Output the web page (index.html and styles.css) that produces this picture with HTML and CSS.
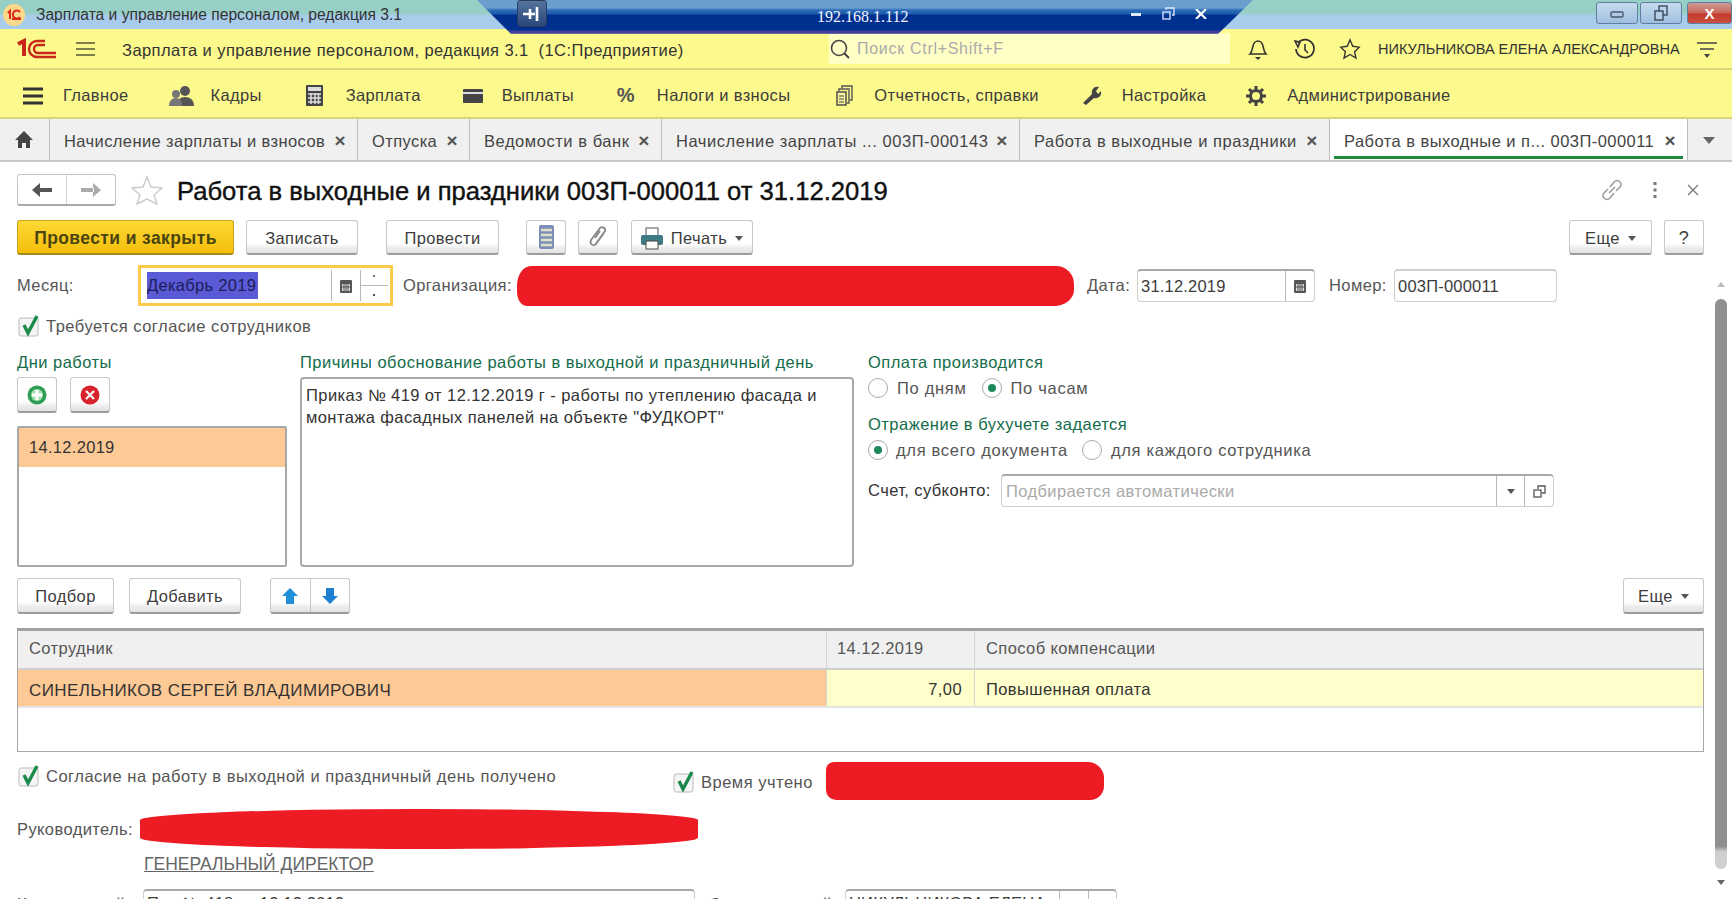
FILE: index.html
```html
<!DOCTYPE html>
<html lang="ru">
<head>
    <meta charset="UTF-8">
    <title>Зарплата и управление персоналом, редакция 3.1</title>
    <link rel="stylesheet" href="styles.css">
</head>
<body>
<div class="window">
    <div class="titlebar">
        <svg class="title-icon" width="24" height="24" viewBox="0 0 24 24"><circle cx="12" cy="12" r="11" fill="#fbd98a"/><path d="M6 10l2-2v8M18 9a4 4 0 1 0 0 5M10 16h9" fill="none" stroke="#d8291c" stroke-width="2"/></svg>
        <div class="title-text">Зарплата и управление персоналом, редакция 3.1</div>
        <div class="win-buttons">
            <div class="win-btn"><svg width="14" height="10"><rect x="1" y="4" width="12" height="5" rx="1" fill="none" stroke="#4a5a70" stroke-width="1.4"/></svg></div>
            <div class="win-btn"><svg width="14" height="16"><rect x="5" y="1" width="8" height="9" fill="none" stroke="#3c4a5c" stroke-width="1.4"/><rect x="1" y="6" width="8" height="9" fill="#b7cde6" stroke="#3c4a5c" stroke-width="1.4"/></svg></div>
            <div class="win-btn win-close">X</div>
        </div>
    </div>
    <div class="rdp">
        <div class="rdp-pin"><svg width="18" height="14"><path d="M0 7h12M7 2v10M14 0v14" fill="none" stroke="#fff" stroke-width="2.6"/></svg></div>
        <div class="rdp-host">192.168.1.112</div>
        <div class="rdp-controls">
            <svg width="11" height="6"><rect y="2" width="10" height="3" fill="#dfe8ff"/></svg>
            <svg width="13" height="13"><path d="M4 3V1h8v7h-2" fill="none" stroke="#dfe8ff" stroke-width="1.3"/><rect x="1" y="5" width="7" height="7" fill="none" stroke="#dfe8ff" stroke-width="1.3"/></svg>
            <svg width="12" height="10"><path d="M1 0l10 10M11 0L1 10" stroke="#fff" stroke-width="2.2"/></svg>
        </div>
    </div>

    <div class="appbar">
        <svg class="logo" width="40" height="22" viewBox="0 0 40 22"><path d="M1 6l6-3v15" fill="none" stroke="#c9261c" stroke-width="4"/><path d="M28 3H20A8 8 0 0 0 12 11A8 8 0 0 0 20 19H39M28 7H21A4 4 0 0 0 17 11A4 4 0 0 0 21 15H39" fill="none" stroke="#c9261c" stroke-width="2.4"/></svg>
        <svg class="app-menu" width="19" height="14"><path d="M0 1h19M0 7h19M0 13h19" stroke="#55553a" stroke-width="1.4"/></svg>
        <div class="app-name">Зарплата и управление персоналом, редакция 3.1 &nbsp;(1С:Предприятие)</div>
        <div class="search">
            <svg width="22" height="22" viewBox="0 0 22 22"><circle cx="10" cy="10" r="7.5" fill="none" stroke="#444" stroke-width="1.6"/><path d="M15 15l5 5" stroke="#444" stroke-width="2"/></svg>
            <span>Поиск Ctrl+Shift+F</span>
        </div>
        <svg class="app-bell" width="20" height="22" viewBox="0 0 20 22"><path d="M2 16c2-2 2-4 3-8 .6-3 3-5 5-5s4.400 2 5 5c1 4 1 6 3 8z" fill="none" stroke="#333" stroke-width="1.6"/><path d="M7 19h6l-3 3z" fill="#333"/></svg>
        <svg class="app-history" width="22" height="22" viewBox="0 0 22 22"><path d="M4 5a9 9 0 1 1-2 6" fill="none" stroke="#333" stroke-width="1.8"/><path d="M1 3l5 1-2 5zM11 6v6l3 3" fill="none" stroke="#333" stroke-width="1.6"/></svg>
        <svg class="app-star" width="22" height="22" viewBox="0 0 24 24"><path d="M12 2l3 7 7 1-5 5 1.500 7-6.500-4-6.500 4L7 15l-5-5 7-1z" fill="none" stroke="#333" stroke-width="1.5"/></svg>
        <div class="user">НИКУЛЬНИКОВА ЕЛЕНА АЛЕКСАНДРОВНА</div>
        <svg class="app-more" width="20" height="22"><path d="M0 5h20M3 11h14" stroke="#444" stroke-width="1.6"/><path d="M7 16h6l-3 4z" fill="#444"/></svg>
    </div>

    <div class="sections">
        <div class="section s-main"><svg width="20" height="20"><path d="M0 3h20M0 10h20M0 17h20" stroke="#333" stroke-width="3"/></svg><span>Главное</span></div>
        <div class="section s-staff"><svg width="25" height="22" viewBox="0 0 25 22"><circle cx="16" cy="6" r="5" fill="#555"/><path d="M8 21c0-6 3-9 8-9s9 3 9 9z" fill="#555"/><circle cx="7" cy="9" r="4" fill="#777"/><path d="M0 21c0-5 3-8 7-8s6 3 6 8z" fill="#777"/></svg><span>Кадры</span></div>
        <div class="section s-pay"><svg width="17" height="21" viewBox="0 0 17 21"><rect width="17" height="21" rx="1" fill="#444"/><rect x="2" y="2" width="13" height="4" fill="#ddd"/><path d="M2 9h13M2 13h13M2 17h13M5 8v11M9 8v11M12.500 8v11" stroke="#ddd" stroke-width="1.5"/></svg><span>Зарплата</span></div>
        <div class="section s-out"><svg width="20" height="16" viewBox="0 0 20 16"><rect y="1" width="20" height="14" rx="1" fill="#444"/><rect y="4" width="20" height="2" fill="#ddd"/></svg><span>Выплаты</span></div>
        <div class="section s-tax"><span class="percent">%</span><span>Налоги и взносы</span></div>
        <div class="section s-rep"><svg width="17" height="21" viewBox="0 0 17 21"><path d="M6 3V1h10v14h-2M3 6V4h10v14h-2" fill="none" stroke="#555" stroke-width="1.4"/><rect x="1" y="7" width="9" height="13" fill="#f8f6a0" stroke="#444" stroke-width="1.4"/><path d="M3 11h5M3 14h5M3 17h5" stroke="#444"/></svg><span>Отчетность, справки</span></div>
        <div class="section s-set"><svg width="21" height="21" viewBox="0 0 21 21"><path d="M2 18L11 9c-1-4 2-8 7-7l-3 4 2 3 3-3c1 5-3 8-7 7l-8 7z" fill="#444"/></svg><span>Настройка</span></div>
        <div class="section s-adm"><svg width="20" height="20" viewBox="0 0 20 20"><circle cx="10" cy="10" r="5.5" fill="none" stroke="#444" stroke-width="3"/><path d="M10 0v4M10 16v4M0 10h4M16 10h4M3 3l3 3M14 14l3 3M17 3l-3 3M6 14l-3 3" stroke="#444" stroke-width="3"/></svg><span>Администрирование</span></div>
    </div>

    <div class="tabs">
        <div class="tab-home"><svg width="18" height="17" viewBox="0 0 18 17"><path d="M9 0L0 9h3v8h4v-5h4v5h4V9h3z" fill="#444"/></svg></div>
        <div class="tab t1"><span>Начисление зарплаты и взносов</span><i>×</i></div>
        <div class="tab t2"><span>Отпуска</span><i>×</i></div>
        <div class="tab t3"><span>Ведомости в банк</span><i>×</i></div>
        <div class="tab t4"><span>Начисление зарплаты ... 003П-000143</span><i>×</i></div>
        <div class="tab t5"><span>Работа в выходные и праздники</span><i>×</i></div>
        <div class="tab t6 active"><span>Работа в выходные и п... 003П-000011</span><i>×</i></div>
        <div class="tab-arrow"></div>
    </div>

    <div class="form">
        <div class="form-head">
            <div class="nav-btn">
                <div class="nav-half"><svg width="20" height="14"><path d="M8 0v14L0 7zM7 5h13v4H7z" fill="#555"/></svg></div>
                <div class="nav-half"><svg width="20" height="14"><path d="M12 0v14l8-7zM0 5h13v4H0z" fill="#aaa"/></svg></div>
            </div>
            <svg class="form-star" width="32" height="29" viewBox="0 0 32 29"><path d="M16 1l4 10 11 1-8 7 3 9-10-5-10 5 3-9-8-7 11-1z" fill="#fff" stroke="#ccc" stroke-width="1.5"/></svg>
            <h1 class="form-title">Работа в выходные и праздники 003П-000011 от 31.12.2019</h1>
            <div class="form-tools">
                <svg width="22" height="22" viewBox="0 0 22 22"><path d="M9 8l4-5c2-2 4-2 6 0s1 4 0 5l-4 4M13 14l-4 5c-2 2-4 2-6 0s-1-4 0-5l4-4M8 14l6-6" fill="none" stroke="#999" stroke-width="1.5"/></svg>
                <svg width="4" height="16"><path d="M2 0v3M2 6.500v3M2 13v3" stroke="#777" stroke-width="3"/></svg>
                <svg width="12" height="12"><path d="M1 1l10 10M11 1L1 11" stroke="#777" stroke-width="1.3"/></svg>
            </div>
        </div>

        <div class="cmd-row">
            <div class="btn btn-primary">Провести и закрыть</div>
            <div class="btn b-save">Записать</div>
            <div class="btn b-post">Провести</div>
            <div class="btn b-ico b-list"><svg width="15" height="24" viewBox="0 0 15 24"><rect width="15" height="24" rx="2" fill="#7d8fb8"/><path d="M2 5h11M2 10h11M2 15h11M2 20h11" stroke="#dde3c8" stroke-width="2.5"/></svg></div>
            <div class="btn b-ico"><svg width="20" height="24" viewBox="0 0 20 24"><path d="M7 20L17 6c1-3-3-5-5-3L3 15c-2 4 3 7 5 4l8-11M7 13l5-7" fill="none" stroke="#888" stroke-width="1.8"/></svg></div>
            <div class="btn b-print"><svg width="22" height="23" viewBox="0 0 22 23"><rect x="5" y="1" width="12" height="8" fill="#fff" stroke="#555"/><rect y="8" width="22" height="10" rx="2" fill="#3d7a82"/><rect x="5" y="14" width="12" height="8" fill="#fff" stroke="#444"/></svg><span>Печать</span><b class="caret"></b></div>
            <div class="btn b-more">Еще<b class="caret"></b></div>
            <div class="btn b-help">?</div>
        </div>

        <div class="field-row">
            <label class="lbl l-month">Месяц:</label>
            <div class="month-input">
                <span class="month-value"><span class="selected">Декабрь 2019</span></span>
                <span class="input-cell cal"><svg width="12" height="14" viewBox="0 0 12 14"><rect y="1" width="12" height="13" rx="1" fill="#555"/><rect x="2" y="5" width="8" height="7" fill="#ddd"/><path d="M4 5v7M6 5v7M8 5v7M2 8h8" stroke="#555"/></svg></span>
                <span class="spin"></span>
            </div>
            <label class="lbl l-org">Организация:</label>
            <div class="redact r-org"></div>
            <label class="lbl l-date">Дата:</label>
            <div class="input i-date"><span class="input-text">31.12.2019</span><span class="input-cell"><svg width="12" height="14" viewBox="0 0 12 14"><rect y="1" width="12" height="13" rx="1" fill="#555"/><rect x="2" y="5" width="8" height="7" fill="#ddd"/><path d="M4 5v7M6 5v7M8 5v7M2 8h8" stroke="#555"/></svg></span></div>
            <label class="lbl l-num">Номер:</label>
            <div class="input i-num"><span class="input-text">003П-000011</span></div>
        </div>

        <div class="check c-top"><svg width="24" height="22" viewBox="0 0 24 22"><rect x="1" y="3" width="19" height="18" rx="2" fill="#f5f5f5" stroke="#bbb"/><path d="M6 10l4 8 9-17" fill="none" stroke="#1c8a4a" stroke-width="3.4"/></svg><span>Требуется согласие сотрудников</span></div>

        <div class="columns">
            <div class="col-days">
                <div class="group-title">Дни работы</div>
                <div class="day-buttons">
                    <div class="btn b-ico"><svg width="20" height="20"><circle cx="10" cy="10" r="9.5" fill="#2f9e55"/><circle cx="10" cy="10" r="6" fill="#a8e0b0"/><path d="M10 5v10M5 10h10" stroke="#fff" stroke-width="3"/></svg></div>
                    <div class="btn b-ico"><svg width="20" height="20"><circle cx="10" cy="10" r="9.5" fill="#d7232b"/><path d="M6 6l8 8M14 6l-8 8" stroke="#fff" stroke-width="2.2"/></svg></div>
                </div>
                <div class="day-list"><div class="day-row">14.12.2019</div></div>
            </div>
            <div class="col-reason">
                <div class="group-title">Причины обоснование работы в выходной и праздничный день</div>
                <div class="reason-box">Приказ № 419 от 12.12.2019 г - работы по утеплению фасада и монтажа фасадных панелей на объекте "ФУДКОРТ"</div>
            </div>
            <div class="col-pay">
                <div class="group-title">Оплата производится</div>
                <div class="radios r-first">
                    <span class="radio"></span><span class="radio-text rt-days">По дням</span>
                    <span class="radio on"></span><span class="radio-text">По часам</span>
                </div>
                <div class="group-title g-second">Отражение в бухучете задается</div>
                <div class="radios r-second">
                    <span class="radio on"></span><span class="radio-text rt-doc">для всего документа</span>
                    <span class="radio"></span><span class="radio-text">для каждого сотрудника</span>
                </div>
                <div class="account">
                    <label class="lbl l-acc">Счет, субконто:</label>
                    <div class="input i-acc">
                        <span class="input-text hint">Подбирается автоматически</span>
                        <span class="input-cell cell-drop"><b class="caret"></b></span>
                        <span class="input-cell cell-open"><svg width="13" height="13"><path d="M5 4V1h7v7H9" fill="none" stroke="#555" stroke-width="1.3"/><rect x="1" y="5" width="7" height="7" fill="none" stroke="#555" stroke-width="1.3"/></svg></span>
                    </div>
                </div>
            </div>
        </div>

        <div class="table-bar">
            <div class="btn b-pick">Подбор</div>
            <div class="btn b-add">Добавить</div>
            <div class="btn b-arrows">
                <div class="arrow-half"><svg width="16" height="16" viewBox="0 0 16 16"><path d="M8 0l8 8h-4v8H4V8H0z" fill="#1f8fd8"/></svg></div>
                <div class="arrow-half"><svg width="16" height="16" viewBox="0 0 16 16"><path d="M8 16l8-8h-4V0H4v8H0z" fill="#1f7fd0"/></svg></div>
            </div>
            <div class="btn b-more2">Еще<b class="caret"></b></div>
        </div>

        <div class="grid">
            <div class="grid-row grid-head">
                <div class="cell c-name">Сотрудник</div>
                <div class="cell c-date">14.12.2019</div>
                <div class="cell c-way">Способ компенсации</div>
            </div>
            <div class="grid-row grid-line">
                <div class="cell c-name picked">СИНЕЛЬНИКОВ СЕРГЕЙ ВЛАДИМИРОВИЧ</div>
                <div class="cell c-date num">7,00</div>
                <div class="cell c-way">Повышенная оплата</div>
            </div>
        </div>

        <div class="check-row">
            <div class="check c-agree"><svg width="24" height="22" viewBox="0 0 24 22"><rect x="1" y="3" width="19" height="18" rx="2" fill="#f5f5f5" stroke="#bbb"/><path d="M6 10l4 8 9-17" fill="none" stroke="#1c8a4a" stroke-width="3.4"/></svg><span>Согласие на работу в выходной и праздничный день получено</span></div>
            <div class="check c-time"><svg width="24" height="22" viewBox="0 0 24 22"><rect x="1" y="3" width="19" height="18" rx="2" fill="#f5f5f5" stroke="#bbb"/><path d="M6 10l4 8 9-17" fill="none" stroke="#1c8a4a" stroke-width="3.4"/></svg><span>Время учтено</span></div>
            <div class="redact r-time"></div>
        </div>

        <div class="boss-row">
            <label class="lbl l-boss">Руководитель:</label>
            <div class="redact r-boss"></div>
        </div>
        <div class="boss-link"><a>ГЕНЕРАЛЬНЫЙ ДИРЕКТОР</a></div>

        <div class="last-row">
            <label class="lbl l-comment">Комментарий:</label>
            <div class="input i-comment"><span class="input-text">При № 418 от 12.12.2019</span></div>
            <label class="lbl l-resp">Ответственный:</label>
            <div class="input i-resp"><span class="input-text">НИКУЛЬНИКОВА ЕЛЕНА</span><span class="input-cell cell-a"></span><span class="input-cell cell-b"></span></div>
        </div>

        <div class="scrollbar">
            <div class="sb-up"></div>
            <div class="sb-thumb"></div>
            <div class="sb-down"></div>
        </div>
    </div>
</div>
</body>
</html>
```

FILE: styles.css
```css
* {
    box-sizing: border-box;
}

html, body {
    margin: 0;
    padding: 0;
    background: #fff;
}

body {
    font-family: "Liberation Sans", Arial, sans-serif;
    font-size: 16px;
    color: #3a3a3a;
}

svg {
    display: block;
    flex: none;
}

.window {
    position: relative;
    width: 1732px;
    height: 906px;
    overflow: hidden;
    display: flex;
    flex-direction: column;
}

/* window title */
.titlebar {
    height: 29px;
    flex: none;
    display: flex;
    align-items: center;
    padding-left: 2px;
    background: linear-gradient(#97cfc6 0, #97cfc6 45%, #a8ccec 55%, #a8ccec 100%);
}

.title-icon {
    margin-right: 10px;
}

.title-text {
    font-size: 15.6px;
    color: #333;
    white-space: nowrap;
}

.win-buttons {
    margin-left: auto;
    display: flex;
    gap: 2px;
    align-self: flex-start;
    padding-top: 2px;
}

.win-btn {
    width: 42px;
    height: 22px;
    border: 1px solid #5d7fa3;
    border-radius: 3px;
    background: linear-gradient(#c7dbef, #9fbfdf);
    display: flex;
    align-items: center;
    justify-content: center;
}

.win-close {
    width: 45px;
    margin-left: 3px;
    background: linear-gradient(#cf9a92 0, #c9645c 50%, #c4392c 55%, #c9503f 100%);
    color: #fff;
    font-weight: bold;
    font-size: 15px;
}

.rdp {
    position: absolute;
    left: 477px;
    top: 0;
    width: 776px;
    height: 34px;
    clip-path: polygon(0 0, 100% 0, 741px 100%, 34px 100%);
    background: linear-gradient(#6b9dcd 0, #6b9dcd 8px, #2b6cb8 10px, #1f5bab 14px, #00308f 15px, #00308f 30px, #45409c 31px, #45409c 33px, #8a8ab0 34px);
    display: flex;
    align-items: center;
}

.rdp-pin {
    position: absolute;
    left: 40px;
    top: 0;
    width: 30px;
    height: 27px;
    background: linear-gradient(#54749c, #29477a);
    border: 1px solid #2a3c5c;
    border-radius: 3px 3px 4px 4px;
    display: flex;
    align-items: center;
    justify-content: center;
}

.rdp-host {
    position: absolute;
    left: 340px;
    top: 8px;
    font-family: "Liberation Serif", serif;
    font-size: 16px;
    color: #f2f4ff;
}

.rdp-controls {
    position: absolute;
    left: 654px;
    top: 7px;
    display: flex;
    align-items: center;
    gap: 20px;
}

/* top yellow bars */
.appbar, .sections {
    background: #fcf98d;
    flex: none;
    display: flex;
    align-items: center;
}

.appbar {
    height: 41px;
    border-bottom: 2px solid #d9d57c;
}

.logo {
    margin-left: 17px;
}

.app-menu {
    margin-left: 19px;
}

.app-name {
    margin-left: 27px;
    width: 707px;
    padding-top: 3px;
    white-space: nowrap;
    font-size: 16.5px;
    letter-spacing: 0.42px;
    color: #333;
}

.search {
    width: 401px;
    height: 31px;
    background: #ffffc6;
    display: flex;
    align-items: center;
    gap: 6px;
    font-size: 16px;
    letter-spacing: 0.7px;
    color: #aaa;
}

.app-bell {
    margin-left: 18px;
}

.app-history {
    margin-left: 26px;
}

.app-star {
    margin-left: 23px;
}

.user {
    margin-left: 17px;
    font-size: 14.5px;
    color: #333;
    white-space: nowrap;
}

.app-more {
    margin-left: 17px;
}

.sections {
    height: 49px;
    border-bottom: 2px solid #d9d57c;
    padding-top: 4px;
}

.section {
    display: flex;
    align-items: center;
    font-size: 16.5px;
    letter-spacing: 0.35px;
    color: #3c3c3c;
    white-space: nowrap;
}

.s-main { margin-left: 23px; gap: 20px; }
.s-staff { margin-left: 40px; gap: 17px; }
.s-pay { margin-left: 44px; gap: 23px; }
.s-out { margin-left: 42px; gap: 19px; }
.s-tax { margin-left: 43px; gap: 20px; }
.s-rep { margin-left: 46px; gap: 21px; }
.s-set { margin-left: 42px; gap: 20px; }
.s-adm { margin-left: 40px; gap: 21px; }

.percent {
    width: 20px;
    font-weight: bold;
    font-size: 20px;
    color: #555;
}

/* tabs */
.tabs {
    height: 43px;
    flex: none;
    display: flex;
    background: #f0f0f0;
    border-bottom: 2px solid #c8c8c8;
}

.tab-home {
    width: 50px;
    display: flex;
    align-items: center;
    justify-content: center;
    padding-right: 2px;
    border-right: 1px solid #bdbdbd;
}

.tab {
    display: flex;
    align-items: center;
    justify-content: space-between;
    padding: 3px 11px 0 14px;
    border-right: 1px solid #bdbdbd;
    font-size: 16.5px;
    letter-spacing: 0.4px;
    color: #444;
    white-space: nowrap;
}

.tab i {
    font-style: normal;
    font-weight: bold;
    font-size: 19px;
    color: #555;
}

.t1 { width: 308px; }
.t2 { width: 112px; }
.t3 { width: 192px; letter-spacing: 0.55px; }
.t4 { width: 358px; letter-spacing: 0.55px; }
.t5 { width: 310px; letter-spacing: 0.55px; }
.t6 { width: 358px; letter-spacing: 0.45px; }

.tab.active {
    background: #fff;
    position: relative;
}

.tab.active::after {
    content: "";
    position: absolute;
    left: 4px;
    right: 4px;
    bottom: 1px;
    height: 3px;
    background: #1e8a3c;
}

.tab-arrow {
    flex: 1;
    position: relative;
}

.tab-arrow::after {
    content: "";
    position: absolute;
    left: 15px;
    top: 18px;
    border: 6px solid transparent;
    border-top: 7px solid #666;
    border-bottom: 0;
}

/* form */
.form {
    position: relative;
    height: 737px;
    flex: none;
    overflow: hidden;
    padding: 12px 28px 0 17px;
}

.form-head {
    display: flex;
    align-items: center;
    height: 32px;
}

.nav-btn {
    width: 99px;
    height: 32px;
    display: flex;
    border: 1px solid #c4c4c4;
    border-bottom: 2px solid #a8a8a8;
    border-radius: 3px;
}

.nav-half {
    flex: 1;
    display: flex;
    align-items: center;
    justify-content: center;
}

.nav-half + .nav-half {
    border-left: 1px solid #d4d4d4;
}

.form-star {
    margin-left: 15px;
}

.form-title {
    margin: 0 0 0 14px;
    padding-top: 3px;
    font-size: 25.6px;
    font-weight: normal;
    color: #111;
    -webkit-text-stroke: 0.4px #111;
    white-space: nowrap;
}

.form-tools {
    position: absolute;
    right: 33px;
    top: 17px;
    display: flex;
    align-items: center;
    gap: 30px;
}

.btn {
    height: 35px;
    padding-top: 2px;
    display: flex;
    align-items: center;
    justify-content: center;
    gap: 8px;
    background: linear-gradient(#fff 0, #fff 70%, #ececec 85%, #e2e2e2 100%);
    border: 1px solid #c8c8c8;
    border-bottom: 2px solid #9c9c9c;
    border-radius: 3px;
    font-size: 16.5px;
    letter-spacing: 0.4px;
    color: #3c3c3c;
    white-space: nowrap;
    flex: none;
}

.cmd-row {
    display: flex;
    margin-top: 14px;
}

.btn-primary {
    width: 217px;
    background: linear-gradient(#fdd835, #f5bf0a);
    border: 1px solid #c9a418;
    border-bottom: 2px solid #a58a1c;
    font-size: 17.5px;
    font-weight: bold;
    color: #4a4410;
}

.b-save { width: 112px; margin-left: 12px; }
.b-post { width: 113px; margin-left: 28px; }
.b-ico { width: 40px; padding-top: 0; }
.b-list { margin-left: 27px; }
.b-list + .b-ico { margin-left: 12px; }
.b-print { width: 122px; margin-left: 13px; }
.b-more { width: 83px; margin-left: auto; }
.b-help { width: 40px; margin-left: 12px; font-size: 18px; }

.caret {
    display: inline-block;
    border: 4px solid transparent;
    border-top: 5px solid #555;
    border-bottom: 0;
}

.field-row {
    display: flex;
    align-items: center;
    margin-top: 10px;
    height: 41px;
}

.lbl {
    flex: none;
    white-space: nowrap;
    font-size: 16.5px;
    letter-spacing: 0.4px;
    color: #555;
}

.l-month { width: 121px; }

.month-input {
    width: 255px;
    height: 41px;
    flex: none;
    display: flex;
    align-items: stretch;
    border: 3px solid #fccb4a;
    padding: 2px 0;
}

.month-value {
    width: 190px;
    padding: 2px 0 2px 6px;
    display: flex;
    align-items: stretch;
}

.selected {
    display: flex;
    align-items: center;
    background: #5a5ad6;
    color: #1c1c58;
    width: 111px;
    font-size: 16.5px;
    letter-spacing: 0.3px;
    white-space: nowrap;
}

.input-cell {
    width: 29px;
    flex: none;
    display: flex;
    align-items: center;
    justify-content: center;
    border-left: 1px solid #b8b8b8;
}

.spin {
    position: relative;
    flex: 1;
    border-left: 1px solid #b8b8b8;
}

.spin::before {
    content: "";
    position: absolute;
    left: 0;
    right: 2px;
    top: 15px;
    height: 1px;
    background: #bbb;
}

.spin::after {
    content: "";
    position: absolute;
    left: 12px;
    top: 5px;
    width: 2px;
    height: 2px;
    background: #777;
    box-shadow: 0 19px 0 #555;
}

.l-org { margin-left: 10px; width: 114px; }
.l-date { margin-left: 13px; width: 50px; }
.l-num { margin-left: 14px; width: 65px; }

.redact {
    flex: none;
    background: #ed1c24;
}

.r-org {
    width: 557px;
    height: 40px;
    border-radius: 14px 18px 20px 10px / 20px 18px 16px 14px;
}

.input {
    flex: none;
    display: flex;
    align-items: stretch;
    height: 33px;
    background: #fff;
    border: 1px solid #cfcfcf;
    border-top: 2px solid #a8a8a8;
    border-radius: 4px;
    font-size: 16.5px;
    letter-spacing: 0.2px;
    color: #3c3c3c;
}

.input-text {
    flex: 1;
    display: flex;
    align-items: center;
    padding-left: 3px;
    white-space: nowrap;
    overflow: hidden;
}

.i-date { width: 178px; }
.i-num { width: 163px; border-top-color: #cfcfcf; }

.check {
    display: flex;
    align-items: center;
    gap: 4px;
    white-space: nowrap;
    font-size: 16.5px;
    letter-spacing: 0.5px;
    color: #555;
}

.c-top {
    margin-top: 9px;
    height: 22px;
    margin-left: 1px;
}

.columns {
    display: flex;
    margin-top: 15px;
}

.col-days {
    width: 270px;
    flex: none;
}

.col-reason {
    width: 554px;
    margin-left: 13px;
    flex: none;
}

.col-pay {
    margin-left: 14px;
    width: 690px;
    flex: none;
}

.group-title {
    height: 20px;
    line-height: 20px;
    font-size: 16.5px;
    letter-spacing: 0.48px;
    color: #146c4a;
    white-space: nowrap;
}

.day-buttons {
    display: flex;
    gap: 13px;
    margin-top: 5px;
}

.day-buttons .btn {
    height: 36px;
}

.day-list {
    margin-top: 13px;
    height: 141px;
    border: 2px solid #a8a8a8;
    border-radius: 2px;
}

.day-row {
    height: 39px;
    background: #fdc995;
    display: flex;
    align-items: center;
    padding-left: 10px;
    font-size: 16.5px;
    letter-spacing: 0.3px;
    color: #333;
}

.reason-box {
    margin-top: 5px;
    height: 190px;
    padding: 5px 4px;
    border: 2px solid #a8a8a8;
    border-radius: 4px;
    font-size: 16.5px;
    letter-spacing: 0.42px;
    line-height: 22px;
    color: #333;
}

.radios {
    display: flex;
    align-items: center;
    height: 22px;
    margin-top: 5px;
    font-size: 16.5px;
    letter-spacing: 0.7px;
    color: #555;
}

.radio {
    width: 20px;
    height: 20px;
    flex: none;
    border: 1px solid #aaa;
    border-radius: 50%;
    background: #fff;
    display: flex;
    align-items: center;
    justify-content: center;
}

.radio.on::after {
    content: "";
    width: 8px;
    height: 8px;
    border-radius: 50%;
    background: #1c8a5a;
}

.radio-text {
    margin-left: 9px;
    white-space: nowrap;
}

.rt-days { margin-right: 15px; }
.rt-doc { margin-left: 8px; margin-right: 14px; }

.g-second {
    margin-top: 15px;
}

.account {
    display: flex;
    align-items: center;
    margin-top: 13px;
}

.l-acc {
    width: 133px;
    color: #333;
}

.i-acc {
    width: 553px;
    height: 33px;
    letter-spacing: 0.4px;
}

.hint {
    color: #aaa;
    padding-left: 4px;
}

.cell-drop { width: 28px; }

.table-bar {
    display: flex;
    margin-top: 11px;
}

.table-bar .btn {
    height: 36px;
}

.b-pick { width: 97px; }
.b-add { width: 112px; margin-left: 15px; }
.b-arrows { width: 80px; margin-left: 29px; gap: 0; align-items: stretch; padding-top: 0; }
.b-more2 { width: 81px; margin-left: auto; }

.arrow-half {
    flex: 1;
    display: flex;
    align-items: center;
    justify-content: center;
}

.arrow-half + .arrow-half {
    border-left: 1px solid #c8c8c8;
}

.grid {
    margin-top: 14px;
    height: 124px;
    border: 1px solid #a8a8a8;
    border-top: 3px solid #a0a0a0;
}

.grid-row {
    display: flex;
}

.grid-head {
    height: 39px;
    background: #f0f0f0;
    border-bottom: 2px solid #cfcfcf;
}

.grid-head .cell {
    padding-bottom: 2px;
}

.grid-line {
    height: 38px;
    background: #ffffcc;
    border-bottom: 2px solid #e4e4e4;
}

.cell {
    display: flex;
    align-items: center;
    padding: 0 10px;
    font-size: 16.5px;
    letter-spacing: 0.4px;
    color: #555;
    white-space: nowrap;
    border-right: 1px solid #d4d4d4;
}

.c-name { width: 809px; padding-left: 11px; }
.c-date { width: 148px; }
.c-way { flex: 1; border-right: 0; padding-left: 11px; }

.grid-line .cell {
    color: #333;
    padding-top: 3px;
}

.grid-line .cell.picked {
    background: #fdc995;
    font-size: 17px;
    padding-top: 5px;
}

.cell.num {
    justify-content: flex-end;
    padding-right: 12px;
}

.check-row {
    position: relative;
    height: 44px;
    margin-top: 7px;
    display: flex;
}

.c-agree {
    margin: 6px 0 0 1px;
    height: 22px;
    width: 655px;
}

.c-time {
    height: 22px;
    margin-top: 12px;
    width: 153px;
}

.r-time {
    width: 278px;
    height: 38px;
    margin-top: 3px;
    border-radius: 8px 16px 14px 10px;
}

.boss-row {
    display: flex;
    align-items: center;
    height: 40px;
    margin-top: 6px;
}

.l-boss { width: 123px; }

.r-boss {
    width: 558px;
    height: 40px;
    border-radius: 50% / 28%;
}

.boss-link {
    margin-top: 5px;
    padding-left: 127px;
    font-size: 17.5px;
    color: #666;
}

.boss-link a {
    text-decoration: underline;
}

/* cut off by the bottom edge of the form */
.last-row {
    display: flex;
    align-items: flex-start;
    margin-top: 14px;
    height: 34px;
}

.last-row .input-text {
    align-items: flex-start;
    padding-top: 3px;
}

.l-comment {
    width: 126px;
    padding-top: 6px;
}

.i-comment { width: 552px; }

.l-resp {
    margin-left: 14px;
    width: 136px;
    padding-top: 6px;
}

.i-resp { width: 272px; }

.cell-a { width: 29px; }
.cell-b { width: 28px; }

.scrollbar {
    position: absolute;
    right: 5px;
    top: 120px;
    width: 12px;
    height: 603px;
}

.sb-up, .sb-down {
    position: absolute;
    left: 2px;
    border: 4px solid transparent;
}

.sb-up {
    top: 0;
    border-bottom: 5px solid #bbb;
    border-top: 0;
}

.sb-down {
    bottom: 0;
    border-top: 5px solid #666;
    border-bottom: 0;
}

.sb-thumb {
    position: absolute;
    left: 0;
    right: 0;
    top: 17px;
    height: 570px;
    border-radius: 6px;
    background: linear-gradient(#8f8f8f 0, #8f8f8f 96%, #cfcfcf 97%);
}
```
